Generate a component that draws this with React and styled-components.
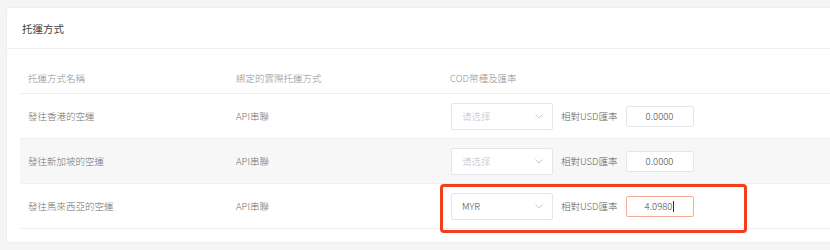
import React from "react";
import styled, { createGlobalStyle } from "styled-components";

const GlobalStyle = createGlobalStyle`
  body {
    margin: 0;
    background: #f5f5f6;
    font-family: "Noto Sans CJK TC", "Noto Sans", sans-serif;
    overflow: hidden;
  }
`;

const Page = styled.div`
  padding: 7px 0 0 6px;
  display: flex;
`;

const Card = styled.section`
  flex: 1;
  background: #fff;
  border: 1px solid #efeff1;
  border-right: none;
  border-radius: 3px 0 0 3px;
  padding-bottom: 13px;
`;

const CardHeader = styled.div`
  height: 40px;
  display: flex;
  align-items: center;
  padding-left: 15px;
  font-size: 10.5px;
  font-weight: 400;
  color: #404040;
  border-bottom: 1px solid #f0f0f2;
`;

const Table = styled.div`
  margin: 13px 0 0 13px;
`;

const Row = styled.div`
  display: grid;
  grid-template-columns: 208px 214px 1fr;
  align-items: center;
  height: ${(p) => (p.$head ? "32px" : "45px")};
  background: ${(p) => (p.$striped ? "#f7f7f8" : "#fff")};
  border-bottom: 1px solid #f0f0f2;
  box-sizing: border-box;
  font-size: 9.5px;
  font-weight: 300;
  color: ${(p) => (p.$head ? "#909090" : "#707070")};
`;

const Cell = styled.div`
  padding-left: 8px;
`;

const Controls = styled.div`
  position: relative;
  display: flex;
  align-items: center;
  gap: 8px;
  margin-left: 1px;
`;

const Highlight = styled.div`
  position: absolute;
  left: -11px;
  top: -9px;
  width: 307px;
  height: 49px;
  border: 3px solid #f33d1d;
  border-radius: 4px;
  box-sizing: border-box;
  pointer-events: none;
`;

const Select = styled.div`
  width: 102px;
  height: 27px;
  box-sizing: border-box;
  border: 1px solid #e6e6e8;
  border-radius: 2px;
  background: #fff;
  display: flex;
  align-items: center;
  justify-content: space-between;
  padding: 0 9px 0 10px;
  color: ${(p) => (p.$placeholder ? "#c4c4c8" : "#4a4a4a")};
`;

const Chevron = () => (
  <svg width="8" height="5" viewBox="0 0 8 5" fill="none">
    <path d="M0.5 0.5 L4 4 L7.5 0.5" stroke="#c4c4c8" strokeWidth="0.9" />
  </svg>
);

const Label = styled.span`
  color: #606060;
`;

const Input = styled.div`
  width: 68px;
  height: 21px;
  box-sizing: border-box;
  border: 1px solid ${(p) => (p.$focus ? "#f6ad98" : "#e6e6e8")};
  border-radius: 2px;
  background: #fff;
  display: flex;
  align-items: center;
  justify-content: center;
  color: #4a4a4a;
`;

const Caret = styled.span`
  display: inline-block;
  width: 1px;
  height: 11px;
  background: #333;
  margin-left: 1px;
`;

const rows = [
  { name: "發往香港的空運", currency: null, rate: "0.0000" },
  { name: "發往新加坡的空運", currency: null, rate: "0.0000" },
  { name: "發往馬來西亞的空運", currency: "MYR", rate: "4.0980", active: true },
];

export default function App() {
  return (
    <>
      <GlobalStyle />
      <Page>
        <Card>
          <CardHeader>托運方式</CardHeader>
          <Table>
            <Row $head>
              <Cell>托運方式名稱</Cell>
              <Cell>綁定的實際托運方式</Cell>
              <Cell>COD幣種及匯率</Cell>
            </Row>
            {rows.map((r, i) => (
              <Row key={r.name} $striped={i === 1}>
                <Cell>{r.name}</Cell>
                <Cell>API串聯</Cell>
                <Cell>
                  <Controls>
                    {r.active && <Highlight />}
                    <Select $placeholder={!r.currency}>
                      <span>{r.currency || "请选择"}</span>
                      <Chevron />
                    </Select>
                    <Label>相對USD匯率</Label>
                    <Input $focus={r.active}>
                      {r.rate}
                      {r.active && <Caret />}
                    </Input>
                  </Controls>
                </Cell>
              </Row>
            ))}
          </Table>
        </Card>
      </Page>
    </>
  );
}
